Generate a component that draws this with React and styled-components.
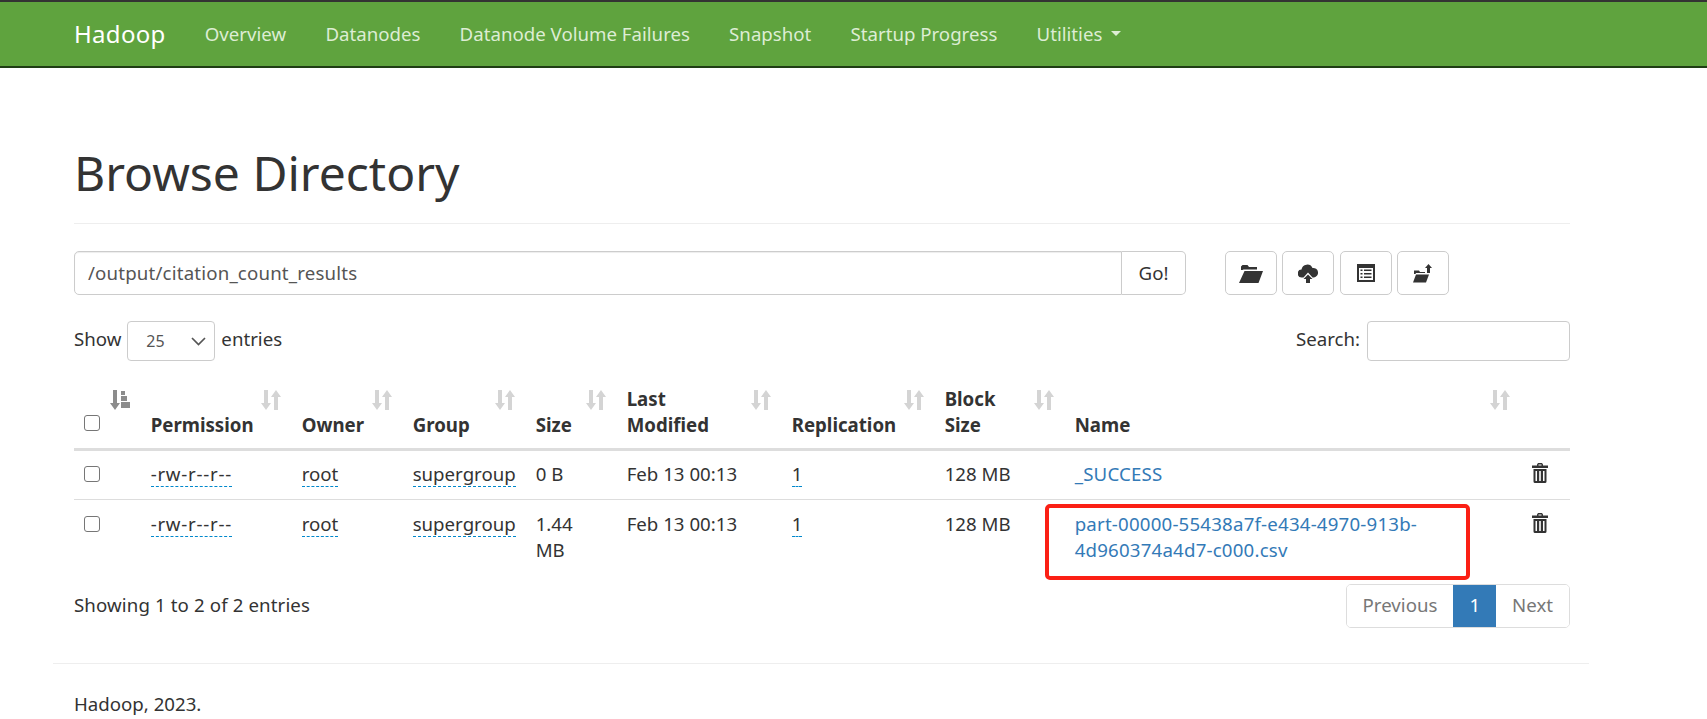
import styled, { createGlobalStyle } from 'styled-components';

const GlobalStyle = createGlobalStyle`
    html, body {
        margin: 0;
        padding: 0;
        background: #fff;
    }
    body {
        font-family: "Noto Sans", "Open Sans", sans-serif;
        font-size: 18.67px;
        line-height: 26.67px;
        color: #333;
    }
`;

const NavBar = styled.nav`
    height: 68px;
    box-sizing: border-box;
    background: #5fa33e;
    border-top: 2px solid #333;
    border-bottom: 2px solid #1f3d14;
    padding-left: 74px;
    display: flex;
    align-items: center;
    gap: 39.2px;
`;

const Brand = styled.a`
    color: #fff;
    font-size: 24px;
    letter-spacing: 0.3px;
`;

const NavLink = styled.a`
    color: #ddedd4;
    display: flex;
    align-items: center;
    gap: 9px;
`;

const Caret = styled.span`
    width: 0;
    height: 0;
    border-top: 5px solid #ddedd4;
    border-left: 5px solid transparent;
    border-right: 5px solid transparent;
`;

const Page = styled.main`
    padding: 0 137px 0 74px;
`;

const Title = styled.h1`
    margin: 0;
    padding: 78px 0 24px;
    font-size: 48px;
    line-height: 53px;
    font-weight: 400;
    border-bottom: 1px solid #eee;
`;

const Toolbar = styled.div`
    display: flex;
    margin-top: 27px;
`;

const PathGroup = styled.div`
    display: flex;
    width: 1112px;
    height: 44px;
`;

const PathInput = styled.div`
    flex: 1;
    border: 1px solid #ccc;
    border-radius: 5px 0 0 5px;
    padding: 8px 13px;
    color: #555;
    letter-spacing: 0.18px;
    box-shadow: inset 0 1px 1px rgba(0, 0, 0, 0.075);
`;

const GoButton = styled.div`
    width: 64px;
    box-sizing: border-box;
    border: 1px solid #ccc;
    border-left: 0;
    border-radius: 0 5px 5px 0;
    display: flex;
    align-items: center;
    justify-content: center;
`;

const IconButtons = styled.div`
    display: flex;
    gap: 5.33px;
    margin-left: 39px;
`;

const IconButton = styled.div`
    width: 52px;
    height: 44px;
    box-sizing: border-box;
    border: 1px solid #ccc;
    border-radius: 5px;
    display: flex;
    align-items: center;
    justify-content: center;
`;

const ControlsRow = styled.div`
    display: flex;
    justify-content: space-between;
    align-items: center;
    margin-top: 26px;
`;

const LengthLabel = styled.div`
    display: flex;
    align-items: center;
    gap: 6px;
`;

const LabelText = styled.span`
    padding-bottom: 4px;
`;

const LengthSelect = styled.div`
    width: 88px;
    height: 40px;
    box-sizing: border-box;
    border: 1px solid #ccc;
    border-radius: 4px;
    padding: 0 8px 0 18px;
    font-size: 16px;
    color: #555;
    display: flex;
    align-items: center;
    justify-content: space-between;
`;

const SearchLabel = styled.div`
    display: flex;
    align-items: center;
    gap: 7px;
`;

const SearchInput = styled.div`
    width: 203px;
    height: 40px;
    box-sizing: border-box;
    border: 1px solid #ccc;
    border-radius: 4px;
`;

const Table = styled.table`
    width: 1496px;
    table-layout: fixed;
    border-collapse: collapse;
    margin-top: 14px;
`;

const HeadCell = styled.th`
    position: relative;
    text-align: left;
    vertical-align: bottom;
    font-weight: 700;
    padding: 10.67px 40px 8.67px 10.67px;
    border-bottom: 3px solid #ddd;
`;

const SortMark = styled.svg`
    position: absolute;
    top: 15px;
    right: 10px;
    width: 20px;
    height: 20px;
    color: ${(p) => (p.$active ? '#8c8c8c' : '#d4d4d4')};
`;

const Cell = styled.td`
    vertical-align: top;
    padding: 10.67px;
`;

const Row = styled.tr`
    border-bottom: ${(p) => (p.$last ? '0' : '1px solid #ddd')};

    &:first-child td {
        padding-top: 10px;
        padding-bottom: 11.3px;
    }

    &:last-child td {
        padding-top: 11px;
    }
`;

const Check = styled.span`
    display: block;
    width: 14px;
    height: 14px;
    margin: ${(p) => (p.$head ? '0 0 8px -1px' : '5px 0 0 -1px')};
    border: 1px solid #767676;
    border-radius: 3px;
`;

const Hint = styled.span`
    border-bottom: 1px dashed #0088cc;
    letter-spacing: ${(p) => (p.$wide ? '0.75px' : '0')};
`;

const FileLink = styled.a`
    color: #337ab7;
    letter-spacing: 0.2px;
`;

const FileBox = styled.div`
    position: relative;
`;

const Marker = styled.div`
    position: absolute;
    left: -30px;
    top: -7px;
    width: 425px;
    height: 76px;
    box-sizing: border-box;
    border: 4px solid #fb2015;
    border-radius: 5px;
`;

const FooterRow = styled.div`
    display: flex;
    justify-content: space-between;
    align-items: flex-start;
    margin-top: 9px;
`;

const InfoText = styled.div`
    padding-top: 8px;
    letter-spacing: 0.12px;
`;

const Pager = styled.div`
    display: flex;
    height: 44px;
    border: 1px solid #ddd;
    border-radius: 5px;
    box-sizing: border-box;
    overflow: hidden;
`;

const PageItem = styled.div`
    display: flex;
    align-items: center;
    padding: 0 16px;
    background: ${(p) => (p.$active ? '#337ab7' : '#fff')};
    color: ${(p) => (p.$active ? '#fff' : '#777')};
`;

const Footer = styled.footer`
    box-sizing: border-box;
    margin: 35px 0 0 53px;
    width: 1536px;
    border-top: 1px solid #eee;
    padding: 27px 0 0 21px;
`;

const TrashIcon = styled.svg`
    display: block;
    width: 16px;
    height: 20px;
    margin: 2px 0 0 1px;
`;

const columns = [
    { w: 66, label: '' },
    { w: 151, label: 'Permission' },
    { w: 111, label: 'Owner' },
    { w: 123, label: 'Group' },
    { w: 91, label: 'Size' },
    { w: 165, label: 'Last Modified' },
    { w: 153, label: 'Replication' },
    { w: 130, label: 'Block Size' },
    { w: 456, label: 'Name' },
    { w: 50, label: 'actions', empty: true },
];

const rows = [
    { size: '0 B', name: '_SUCCESS' },
    { size: '1.44 MB', name: 'part-00000-55438a7f-e434-4970-913b-4d960374a4d7-c000.csv', marked: true },
];

function SortIcon({ active }) {
    return (
        <SortMark viewBox="0 0 20 20" $active={active}>
            <path fill="currentColor" d="M3 0h4v13h3l-5 7-5-7h3z" />
            {active ? (
                <path fill="currentColor" d="M11 1h4v4h-4zM11 6h6v5h-6zM11 12h9v6h-9z" />
            ) : (
                <path fill="currentColor" d="M13 20h4V7h3l-5-7-5 7h3z" />
            )}
        </SortMark>
    );
}

function Trash() {
    return (
        <TrashIcon viewBox="0 0 16 20">
            <path
                fill="#333"
                fillRule="evenodd"
                d="M5 2.500V1.500L6 0h4l1 1.500v1h5V5H0V2.500zM6.500 2.500h3V1.500h-3zM1.500 6h13v12.500a1.500 1.500 0 0 1-1.500 1.500H3a1.500 1.500 0 0 1-1.500-1.500zM3.500 8v10h1.500V8zm3.700 0v10h1.600V8zm3.800 0v10h1.500V8z"
            />
        </TrashIcon>
    );
}

export default function App() {
    return (
        <div>
            <GlobalStyle />
            <NavBar>
                <Brand>Hadoop</Brand>
                <NavLink>Overview</NavLink>
                <NavLink>Datanodes</NavLink>
                <NavLink>Datanode Volume Failures</NavLink>
                <NavLink>Snapshot</NavLink>
                <NavLink>Startup Progress</NavLink>
                <NavLink>Utilities <Caret /></NavLink>
            </NavBar>
            <Page>
                <Title>Browse Directory</Title>
                <Toolbar>
                    <PathGroup>
                        <PathInput>/output/citation_count_results</PathInput>
                        <GoButton>Go!</GoButton>
                    </PathGroup>
                    <IconButtons>
                        <IconButton>
                            <svg width="24" height="19" viewBox="0 0 24 19">
                                <path fill="#333" d="M2 6V2.500L3.500 1h5L10 3h8v2.500H4.500L3.500 6zM5.500 7H24l-4.500 12H0z" />
                            </svg>
                        </IconButton>
                        <IconButton>
                            <svg width="20" height="20" viewBox="0 0 20 20">
                                <path fill="#333" d="M4 14.500a4 4 0 0 1-.5-8A5.800 5.800 0 0 1 14.500 5 4.800 4.800 0 0 1 16 14.500h-1.500L10 9.500 5.500 14.500zM10 11.500l4.500 4.500H12v4H8v-4H5.500z" />
                            </svg>
                        </IconButton>
                        <IconButton>
                            <svg width="18" height="18" viewBox="0 0 18 18">
                                <path fill="#333" fillRule="evenodd" d="M0 0h18v18H0zM2 4v12h14V4zM3.500 5.500h2v1.500h-2zM7 5.500h7.500v1.500H7zM3.500 9h2v1.500h-2zM7 9h7.500v1.500H7zM3.500 12.500h2V14h-2zM7 12.500h7.500V14H7z" />
                            </svg>
                        </IconButton>
                        <IconButton>
                            <svg width="20" height="19" viewBox="0 0 20 19">
                                <path fill="#333" d="M1 10V6.500h5L7 8h5v1H3l-.5 1zM3 10.500h13l-3 8H0zM15.500 0l3.500 4h-2v5h-3V4h-2z" />
                            </svg>
                        </IconButton>
                    </IconButtons>
                </Toolbar>
                <ControlsRow>
                    <LengthLabel>
                        <LabelText>Show</LabelText>
                        <LengthSelect>
                            25
                            <svg width="15" height="9" viewBox="0 0 15 9">
                                <path fill="none" stroke="#555" strokeWidth="1.700" d="M1 1l6.500 6.500L14 1" />
                            </svg>
                        </LengthSelect>
                        <LabelText>entries</LabelText>
                    </LengthLabel>
                    <SearchLabel>
                        <LabelText>Search:</LabelText>
                        <SearchInput />
                    </SearchLabel>
                </ControlsRow>
                <Table>
                    <colgroup>
                        {columns.map((c) => <col key={c.label} style={{ width: c.w }} />)}
                    </colgroup>
                    <thead>
                        <tr>
                            {columns.map((c, i) => (
                                <HeadCell key={c.label}>
                                    {i === 0 && <Check $head />}
                                    {!c.empty && c.label}
                                    {!c.empty && <SortIcon active={i === 0} />}
                                </HeadCell>
                            ))}
                        </tr>
                    </thead>
                    <tbody>
                        {rows.map((r, i) => (
                            <Row key={r.name} $last={i === rows.length - 1}>
                                <Cell><Check /></Cell>
                                <Cell><Hint $wide>-rw-r--r--</Hint></Cell>
                                <Cell><Hint>root</Hint></Cell>
                                <Cell><Hint>supergroup</Hint></Cell>
                                <Cell>{r.size}</Cell>
                                <Cell>Feb 13 00:13</Cell>
                                <Cell><Hint>1</Hint></Cell>
                                <Cell>128 MB</Cell>
                                <Cell>
                                    <FileBox>
                                        <FileLink>{r.name}</FileLink>
                                        {r.marked && <Marker />}
                                    </FileBox>
                                </Cell>
                                <Cell><Trash /></Cell>
                            </Row>
                        ))}
                    </tbody>
                </Table>
                <FooterRow>
                    <InfoText>Showing 1 to 2 of 2 entries</InfoText>
                    <Pager>
                        <PageItem>Previous</PageItem>
                        <PageItem $active>1</PageItem>
                        <PageItem>Next</PageItem>
                    </Pager>
                </FooterRow>
            </Page>
            <Footer>Hadoop, 2023.</Footer>
        </div>
    );
}
